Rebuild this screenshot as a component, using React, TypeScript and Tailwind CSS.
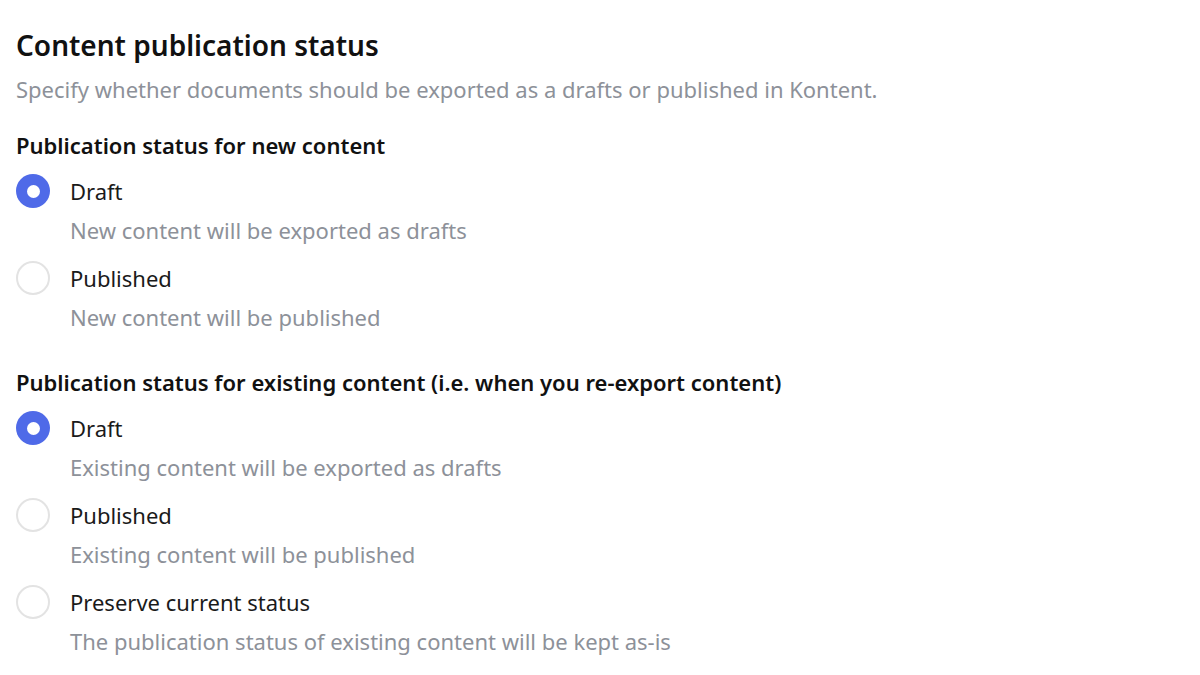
import React, { useState } from 'react';

interface Option {
    value: string;
    label: string;
    description: string;
}

const newOptions: Option[] = [
    { value: 'draft', label: 'Draft', description: 'New content will be exported as drafts' },
    { value: 'published', label: 'Published', description: 'New content will be published' },
];

const existingOptions: Option[] = [
    { value: 'draft', label: 'Draft', description: 'Existing content will be exported as drafts' },
    { value: 'published', label: 'Published', description: 'Existing content will be published' },
    { value: 'preserve', label: 'Preserve current status', description: 'The publication status of existing content will be kept as-is' },
];

const RadioGroup: React.FC<{ title: string; options: Option[]; value: string; onChange: (v: string) => void }> = ({ title, options, value, onChange }) => (
    <div className="flex flex-col">
        <h3 className="text-[22px] font-semibold text-[#111] leading-[30px]">{title}</h3>
        <div className="flex flex-col gap-[9px] mt-[12px]">
            {options.map(opt => {
                const checked = opt.value === value;
                return (
                    <label key={opt.value} className="flex items-start gap-[20px] cursor-pointer" onClick={() => onChange(opt.value)}>
                        <span
                            className={`mt-[2px] w-[34px] h-[34px] rounded-full flex items-center justify-center shrink-0 ${checked
                                    ? 'bg-[#4f6ae8]'
                                    : 'bg-white border-2 border-[#e3e3e3]'
                                }`}
                        >
                            {checked && <span className="w-[13px] h-[13px] rounded-full bg-white" />}
                        </span>
                        <span className="flex flex-col">
                            <span className="text-[22px] text-[#1a1a1a] leading-[39px]">{opt.label}</span>
                            <span className="text-[22px] text-[#8d9199] leading-[39px]">{opt.description}</span>
                        </span>
                    </label>
                );
            })}
        </div>
    </div>
);

export default function App() {
    const [newStatus, setNewStatus] = useState('draft');
    const [existingStatus, setExistingStatus] = useState('draft');

    return (
        <div className="w-[1200px] h-[675px] bg-white px-[16px] pt-[26px]" style={{ fontFamily: '"Noto Sans", sans-serif' }}>
            {/* Header */}
            <h2 className="text-[28px] font-semibold text-[#111] leading-[38px]">Content publication status</h2>
            <p className="text-[22px] text-[#8d9199] leading-[30px] mt-[10px]">
                Specify whether documents should be exported as a drafts or published in Kontent.
            </p>

            <div className="mt-[26px]">
                <RadioGroup title="Publication status for new content" options={newOptions} value={newStatus} onChange={setNewStatus} />
            </div>
            <div className="mt-[30px]">
                <RadioGroup title="Publication status for existing content (i.e. when you re-export content)" options={existingOptions} value={existingStatus} onChange={setExistingStatus} />
            </div>
        </div>
    );
}
